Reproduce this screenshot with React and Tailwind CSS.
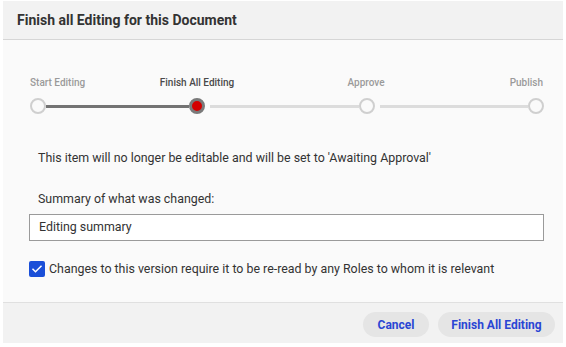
export default function App() {
  const font = { fontFamily: 'Roboto, "Liberation Sans", Arial, sans-serif' };
  return (
    <div className="w-[566px] h-[347px] bg-white pt-[1px] px-[3px]" style={font}>
      <div className="w-[560px] h-[342px] flex flex-col bg-[#fafafa]">
        <div className="h-[39px] shrink-0 bg-[#f2f2f2] border-b border-[#d6d6d6] flex items-center pl-[14px]">
          <span className="text-[14px] font-bold text-[#333333]">Finish all Editing for this Document</span>
        </div>
        <div className="h-[262px] shrink-0 flex flex-col pl-[27px] pr-[19px]">
          <div className="mt-[37px] flex text-[10px] leading-[12px] font-medium">
            <div className="w-[80px] text-left text-[#9a9a9a]">Start Editing</div>
            <div className="ml-[47px] w-[80px] text-center text-[#4a4a4a]">Finish All Editing</div>
            <div className="ml-[89px] w-[80px] text-center text-[#9a9a9a]">Approve</div>
            <div className="flex-1 text-right pr-[1px] text-[#9a9a9a]">Publish</div>
          </div>
          <div className="mt-[9px] flex items-center h-[16px]">
            <div className="w-[16px] h-[16px] rounded-full border-2 border-[#cfcfcf] bg-[#fafafa] shrink-0" />
            <div className="w-[143px] h-[3px] bg-[#737373]" />
            <div className="w-[16px] h-[16px] rounded-full border-[3px] border-[#7a7a7a] bg-[#d40000] shrink-0" />
            <div className="ml-[5px] flex-1 h-[3px] bg-[#dcdcdc]" />
            <div className="w-[16px] h-[16px] rounded-full border-2 border-[#cfcfcf] bg-[#fafafa] shrink-0" />
            <div className="ml-[5px] flex-1 h-[3px] bg-[#dcdcdc]" />
            <div className="w-[16px] h-[16px] rounded-full border-2 border-[#cfcfcf] bg-[#fafafa] shrink-0" />
          </div>
          <p className="mt-[36px] pl-[8px] text-[12.4px] leading-[16px] text-[#333333]">
            This item will no longer be editable and will be set to 'Awaiting Approval'
          </p>
          <p className="mt-[25px] pl-[8px] text-[12.4px] leading-[16px] text-[#333333]">Summary of what was changed:</p>
          <div className="mt-[7px] h-[27px] w-[515px] -ml-[1px] border border-[#9a9a9a] bg-white flex items-center pl-[9px]">
            <span className="text-[12.4px] text-[#333333]">Editing summary</span>
          </div>
          <div className="mt-[20px] flex items-center h-[16px] -ml-[1px]">
            <div className="w-[16px] h-[16px] rounded-[2px] bg-[#1a4fd8] flex items-center justify-center shrink-0">
              <svg width="12" height="12" viewBox="0 0 24 24" fill="none" stroke="white" strokeWidth="3" strokeLinecap="square">
                <path d="M4 12.5l5 5L20 6.5" />
              </svg>
            </div>
            <span className="ml-[4px] text-[12.4px] text-[#333333]">
              Changes to this version require it to be re-read by any Roles to whom it is relevant
            </span>
          </div>
        </div>
        <div className="flex-1 border-t border-[#e0e0e0] bg-[#f2f2f2] flex justify-end items-start pt-[9px] pr-[8px] gap-[9px]">
          <button className="h-[25px] w-[66px] rounded-full bg-[#e5e5e5] text-[12px] font-bold text-[#2a46d4]">Cancel</button>
          <button className="h-[25px] w-[117px] rounded-full bg-[#e5e5e5] text-[12px] font-bold text-[#2a46d4]">Finish All Editing</button>
        </div>
      </div>
    </div>
  );
}
